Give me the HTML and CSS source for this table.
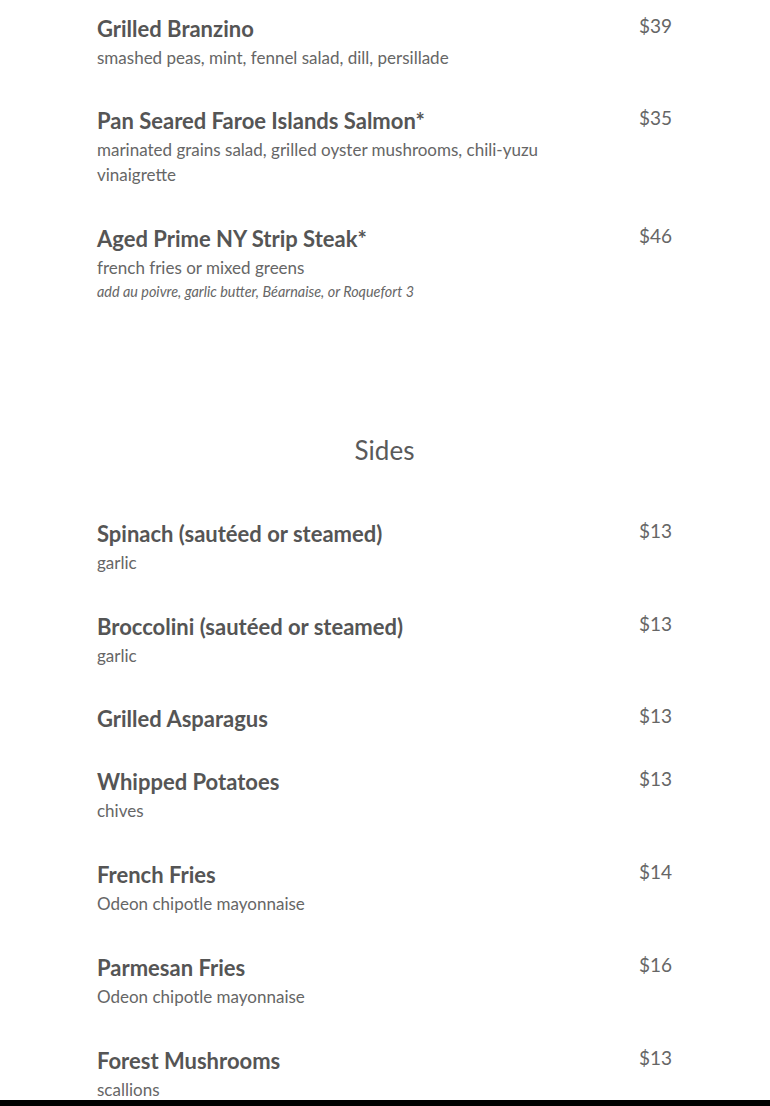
FILE: index.html
```html
<!DOCTYPE html>
<html>
<head>
<meta charset="utf-8">
<link rel="stylesheet" href="styles.css">
</head>
<body>
<main class="menu">
  <section class="section">
    <div class="item">
      <div class="info">
        <h3 class="name">Grilled Branzino</h3>
        <p class="desc">smashed peas, mint, fennel salad, dill, persillade</p>
      </div>
      <div class="price">$39</div>
    </div>
    <div class="item">
      <div class="info">
        <h3 class="name">Pan Seared Faroe Islands Salmon*</h3>
        <p class="desc">marinated grains salad, grilled oyster mushrooms, chili-yuzu vinaigrette</p>
      </div>
      <div class="price">$35</div>
    </div>
    <div class="item">
      <div class="info">
        <h3 class="name">Aged Prime NY Strip Steak*</h3>
        <p class="desc">french fries or mixed greens</p>
        <p class="note">add au poivre, garlic butter, Béarnaise, or Roquefort 3</p>
      </div>
      <div class="price">$46</div>
    </div>
  </section>

  <section class="section sides">
    <h2 class="section-title">Sides</h2>
    <div class="item">
      <div class="info">
        <h3 class="name">Spinach (sautéed or steamed)</h3>
        <p class="desc">garlic</p>
      </div>
      <div class="price">$13</div>
    </div>
    <div class="item">
      <div class="info">
        <h3 class="name">Broccolini (sautéed or steamed)</h3>
        <p class="desc">garlic</p>
      </div>
      <div class="price">$13</div>
    </div>
    <div class="item">
      <div class="info">
        <h3 class="name">Grilled Asparagus</h3>
      </div>
      <div class="price">$13</div>
    </div>
    <div class="item">
      <div class="info">
        <h3 class="name">Whipped Potatoes</h3>
        <p class="desc">chives</p>
      </div>
      <div class="price">$13</div>
    </div>
    <div class="item">
      <div class="info">
        <h3 class="name">French Fries</h3>
        <p class="desc">Odeon chipotle mayonnaise</p>
      </div>
      <div class="price">$14</div>
    </div>
    <div class="item">
      <div class="info">
        <h3 class="name">Parmesan Fries</h3>
        <p class="desc">Odeon chipotle mayonnaise</p>
      </div>
      <div class="price">$16</div>
    </div>
    <div class="item">
      <div class="info">
        <h3 class="name">Forest Mushrooms</h3>
        <p class="desc">scallions</p>
      </div>
      <div class="price">$13</div>
    </div>
  </section>
</main>
<div class="bottom-bar"></div>
</body>
</html>
```

FILE: styles.css
```css
html, body {
  margin: 0;
  padding: 0;
  background: #ffffff;
}
body {
  font-family: "Lato", "Noto Sans", sans-serif;
  color: #666666;
}
.menu {
  width: 575px;
  margin: 0 0 0 97px;
  padding-top: 16.5px;
}
.section {
  display: flex;
  flex-direction: column;
}
.sides {
  margin-top: 89.5px;
}
.section-title {
  margin: 0 0 54.5px;
  text-align: center;
  font-weight: 400;
  font-size: 26px;
  line-height: 34px;
  color: #5a5a5a;
}
.item {
  display: flex;
  justify-content: space-between;
  align-items: flex-start;
  gap: 60px;
  margin-bottom: 39.8px;
}
.info {
  flex: 1;
  display: flex;
  flex-direction: column;
  gap: 5px;
}
.name {
  margin: 0;
  font-size: 22px;
  line-height: 23px;
  font-weight: 700;
  color: #555555;
}
.desc {
  margin: 0;
  font-size: 17px;
  line-height: 25px;
  font-weight: 400;
  color: #666666;
}
.note {
  margin: -5px 0 0;
  font-size: 14.4px;
  line-height: 24px;
  font-style: italic;
  color: #666666;
}
.price {
  font-size: 19px;
  line-height: 17px;
  font-weight: 400;
  color: #666666;
  white-space: nowrap;
}
.bottom-bar {
  position: fixed;
  left: 0;
  right: 0;
  bottom: 0;
  height: 6px;
  background: #000000;
}
```
